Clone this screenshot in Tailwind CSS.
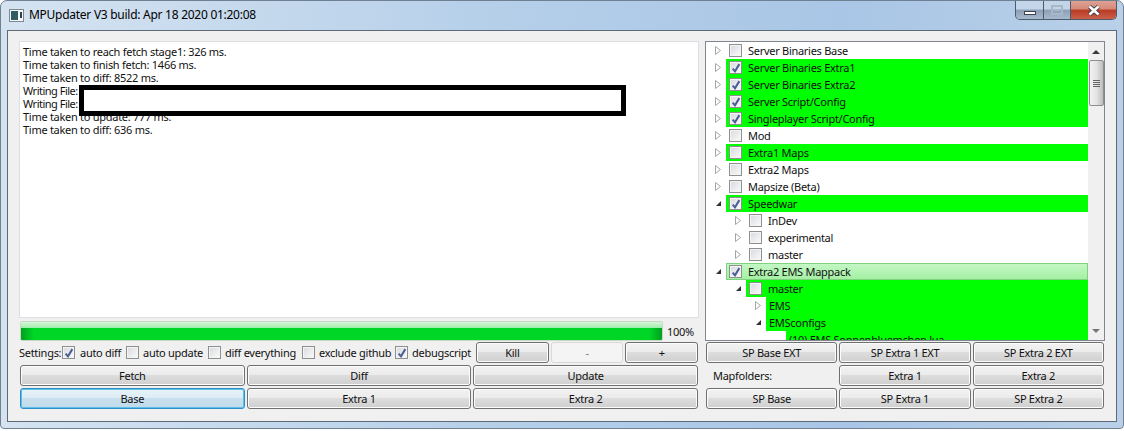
<!DOCTYPE html>
<html>
<head>
<meta charset="utf-8">
<script src="https://cdn.jsdelivr.net/npm/@tailwindcss/browser@4"></script>
</head>
<body class="bg-white">
<div class="relative flex h-[429px] w-[1124px] flex-col overflow-hidden rounded-t-[7px] rounded-b-[4px] border border-[#6f8092] bg-[linear-gradient(90deg,#d5e3f1_0%,#b5cfe9_45%,#a9c6e6_75%,#b9d0e8_100%)] font-['Noto_Sans',sans-serif] text-[11px] leading-[13px] tracking-[-0.28px] text-[#111] whitespace-nowrap">
  <!-- title bar -->
  <div class="flex h-[29px] shrink-0 items-start">
    <svg class="ml-[8px] mt-[8px] h-[13px] w-[15px] shrink-0" viewBox="0 0 15 13"><rect x="0.5" y="0.5" width="14" height="12" fill="#f5f7f8" stroke="#7d8890"/><rect x="2" y="2" width="7" height="9" fill="#2f5d66"/><rect x="11" y="3" width="2" height="6" fill="#33424a"/></svg>
    <span class="ml-[5px] mt-[6px] text-[12px] leading-[16px] tracking-[-0.27px] text-black">MPUpdater V3 build: Apr 18 2020 01:20:08</span>
    <div class="ml-auto mr-[6px] flex h-[19px] w-[102px] overflow-hidden rounded-b-[5px] border border-t-0 border-[#4f5a69]">
      <div class="flex w-[28px] items-center justify-center border-r border-[#4f5a69] bg-[linear-gradient(#c3d5e8_0%,#c3d5e8_45%,#8d9fb5_50%,#a5b9cf_100%)]"><div class="mt-[5px] h-[4px] w-[12px] border border-[#39424e] bg-white"></div></div>
      <div class="flex w-[27px] items-center justify-center border-r border-[#4f5a69] bg-[linear-gradient(#c3d5e8_0%,#c3d5e8_45%,#8d9fb5_50%,#a5b9cf_100%)]"><div class="flex h-[10px] w-[12px] items-center justify-center border-2 border-[#a9b8c9]"><div class="h-[2px] w-[6px] bg-[#a9b8c9]"></div></div></div>
      <div class="flex flex-1 items-center justify-center bg-[linear-gradient(#dda193_0%,#d58a78_45%,#bb3a24_50%,#c9604b_100%)]"><svg class="h-[11px] w-[14px]" viewBox="0 0 14 11"><path d="M2.5 1.5 L11.5 9.5 M11.5 1.5 L2.5 9.5" stroke="#3a3f48" stroke-width="4.4"/><path d="M2.5 1.5 L11.5 9.5 M11.5 1.5 L2.5 9.5" stroke="#fff" stroke-width="2.6"/></svg></div>
    </div>
  </div>
  <!-- client area -->
  <div class="mx-[6px] flex h-[392px] shrink-0 gap-[6px] border border-[#5e6a78] bg-[#f0f0f0] pl-[11px] pt-[10px]">
    <!-- left column -->
    <div class="relative flex w-[680px] shrink-0 flex-col">
      <div class="h-[277px] border border-[#dcdfe3] bg-white pl-[3px] pt-[3px]">
        <p>Time taken to reach fetch stage1: 326 ms.</p>
        <p>Time taken to finish fetch: 1466 ms.</p>
        <p>Time taken to diff: 8522 ms.</p>
        <p class="tracking-[-0.5px]">Writing File:</p>
        <p class="tracking-[-0.5px]">Writing File:</p>
        <p>Time taken to update: 777 ms.</p>
        <p>Time taken to diff: 636 ms.</p>
      </div>
      <div class="absolute left-[60px] top-[44px] h-[31px] w-[547px] border-[5px] border-black bg-white"></div>
      <div class="mt-[3px] flex h-[20px] items-center pl-px">
        <div class="h-[20px] w-[643px] rounded-[2px] border border-[#c4d8c4] bg-[linear-gradient(90deg,#00a020_0%,#00d626_2%,#00d626_98%,#00a020_100%)]">
          <div class="h-[6px] bg-[linear-gradient(#d8f5d8,#9cedaa)]"></div>
        </div>
        <span class="ml-[4px]">100%</span>
      </div>
      <div class="mt-px flex h-[21px] items-center pl-px pr-px">
        <div class="flex w-[456px] items-center">
          <span class="-ml-px w-[43px]">Settings:</span>
          <div class="flex w-[64px] items-center"><span class="flex h-[13px] w-[13px] items-center justify-center border border-[#8e8f8f] bg-[linear-gradient(135deg,#d6d9de,#fbfbfb)] shadow-[inset_0_0_0_1px_#f4f4f4]"><svg class="h-[10px] w-[10px]" viewBox="0 0 9 9"><path d="M1.5 5 L3.6 7.5 L7.5 1" fill="none" stroke="#4a5f97" stroke-width="1.8"/></svg></span><span class="ml-[5px]">auto diff</span></div>
          <div class="flex w-[82px] items-center"><span class="h-[13px] w-[13px] border border-[#8e8f8f] bg-[linear-gradient(135deg,#d6d9de,#fbfbfb)] shadow-[inset_0_0_0_1px_#f4f4f4]"></span><span class="ml-[4px]">auto update</span></div>
          <div class="flex w-[94px] items-center"><span class="h-[13px] w-[13px] border border-[#8e8f8f] bg-[linear-gradient(135deg,#d6d9de,#fbfbfb)] shadow-[inset_0_0_0_1px_#f4f4f4]"></span><span class="ml-[4px]">diff everything</span></div>
          <div class="flex w-[93px] items-center"><span class="h-[13px] w-[13px] border border-[#8e8f8f] bg-[linear-gradient(135deg,#d6d9de,#fbfbfb)] shadow-[inset_0_0_0_1px_#f4f4f4]"></span><span class="ml-[4px]">exclude github</span></div>
          <div class="flex items-center"><span class="flex h-[13px] w-[13px] items-center justify-center border border-[#8e8f8f] bg-[linear-gradient(135deg,#d6d9de,#fbfbfb)] shadow-[inset_0_0_0_1px_#f4f4f4]"><svg class="h-[10px] w-[10px]" viewBox="0 0 9 9"><path d="M1.5 5 L3.6 7.5 L7.5 1" fill="none" stroke="#4a5f97" stroke-width="1.8"/></svg></span><span class="ml-[4px]">debugscript</span></div>
        </div>
        <div class="flex flex-1 gap-[2px]">
          <button class="h-[21px] flex-1 rounded-[3px] border border-[#707070] bg-[linear-gradient(#f2f2f2_0%,#ebebeb_48%,#dddddd_50%,#cfcfcf_100%)] shadow-[inset_0_0_0_1px_#fcfcfc]">Kill</button>
          <button class="h-[21px] flex-1 rounded-[3px] border border-[#d9d9d9] bg-[#f4f4f4] text-[#777]">-</button>
          <button class="h-[21px] flex-1 rounded-[3px] border border-[#707070] bg-[linear-gradient(#f2f2f2_0%,#ebebeb_48%,#dddddd_50%,#cfcfcf_100%)] shadow-[inset_0_0_0_1px_#fcfcfc]">+</button>
        </div>
      </div>
      <div class="mt-[2px] grid grid-cols-3 gap-[2px] pl-px pr-px">
        <button class="h-[21px] rounded-[3px] border border-[#707070] bg-[linear-gradient(#f2f2f2_0%,#ebebeb_48%,#dddddd_50%,#cfcfcf_100%)] shadow-[inset_0_0_0_1px_#fcfcfc]">Fetch</button>
        <button class="h-[21px] rounded-[3px] border border-[#707070] bg-[linear-gradient(#f2f2f2_0%,#ebebeb_48%,#dddddd_50%,#cfcfcf_100%)] shadow-[inset_0_0_0_1px_#fcfcfc]">Diff</button>
        <button class="h-[21px] rounded-[3px] border border-[#707070] bg-[linear-gradient(#f2f2f2_0%,#ebebeb_48%,#dddddd_50%,#cfcfcf_100%)] shadow-[inset_0_0_0_1px_#fcfcfc]">Update</button>
      </div>
      <div class="mt-[2px] grid grid-cols-3 gap-[2px] pl-px pr-px">
        <button class="h-[21px] rounded-[3px] border border-[#2b8fc9] bg-[linear-gradient(#e8f3f9_0%,#dcebf4_48%,#c9e0ee_50%,#c0dbea_100%)] shadow-[inset_0_0_0_1px_#5fc0ea]">Base</button>
        <button class="h-[21px] rounded-[3px] border border-[#707070] bg-[linear-gradient(#f2f2f2_0%,#ebebeb_48%,#dddddd_50%,#cfcfcf_100%)] shadow-[inset_0_0_0_1px_#fcfcfc]">Extra 1</button>
        <button class="h-[21px] rounded-[3px] border border-[#707070] bg-[linear-gradient(#f2f2f2_0%,#ebebeb_48%,#dddddd_50%,#cfcfcf_100%)] shadow-[inset_0_0_0_1px_#fcfcfc]">Extra 2</button>
      </div>
    </div>
    <!-- right column -->
    <div class="flex w-[400px] shrink-0 flex-col">
      <div class="flex h-[300px] border border-[#82878f] bg-white">
        <div class="h-[298px] w-[382px] shrink-0 overflow-hidden">
          <div class="flex h-[17px] pl-[7px]"><svg class="h-[17px] w-[13px]" viewBox="0 0 13 17"><path d="M2.5 4.5 L7.5 8.5 L2.5 12.5 Z" fill="#fff" stroke="#a6a6a6"/></svg><div class="flex flex-1 items-center pl-[3px]"><span class="h-[13px] w-[13px] border border-[#8e8f8f] bg-[linear-gradient(135deg,#d6d9de,#fbfbfb)] shadow-[inset_0_0_0_1px_#f4f4f4]"></span><span class="ml-[6px]">Server Binaries Base</span></div></div>
          <div class="flex h-[17px] pl-[7px]"><svg class="h-[17px] w-[13px]" viewBox="0 0 13 17"><path d="M2.5 4.5 L7.5 8.5 L2.5 12.5 Z" fill="#fff" stroke="#a6a6a6"/></svg><div class="flex flex-1 items-center bg-[#00ff00] pl-[3px]"><span class="flex h-[13px] w-[13px] items-center justify-center border border-[#8e8f8f] bg-[linear-gradient(135deg,#d6d9de,#fbfbfb)] shadow-[inset_0_0_0_1px_#f4f4f4]"><svg class="h-[10px] w-[10px]" viewBox="0 0 9 9"><path d="M1.5 5 L3.6 7.5 L7.5 1" fill="none" stroke="#4a5f97" stroke-width="1.8"/></svg></span><span class="ml-[6px]">Server Binaries Extra1</span></div></div>
          <div class="flex h-[17px] pl-[7px]"><svg class="h-[17px] w-[13px]" viewBox="0 0 13 17"><path d="M2.5 4.5 L7.5 8.5 L2.5 12.5 Z" fill="#fff" stroke="#a6a6a6"/></svg><div class="flex flex-1 items-center bg-[#00ff00] pl-[3px]"><span class="flex h-[13px] w-[13px] items-center justify-center border border-[#8e8f8f] bg-[linear-gradient(135deg,#d6d9de,#fbfbfb)] shadow-[inset_0_0_0_1px_#f4f4f4]"><svg class="h-[10px] w-[10px]" viewBox="0 0 9 9"><path d="M1.5 5 L3.6 7.5 L7.5 1" fill="none" stroke="#4a5f97" stroke-width="1.8"/></svg></span><span class="ml-[6px]">Server Binaries Extra2</span></div></div>
          <div class="flex h-[17px] pl-[7px]"><svg class="h-[17px] w-[13px]" viewBox="0 0 13 17"><path d="M2.5 4.5 L7.5 8.5 L2.5 12.5 Z" fill="#fff" stroke="#a6a6a6"/></svg><div class="flex flex-1 items-center bg-[#00ff00] pl-[3px]"><span class="flex h-[13px] w-[13px] items-center justify-center border border-[#8e8f8f] bg-[linear-gradient(135deg,#d6d9de,#fbfbfb)] shadow-[inset_0_0_0_1px_#f4f4f4]"><svg class="h-[10px] w-[10px]" viewBox="0 0 9 9"><path d="M1.5 5 L3.6 7.5 L7.5 1" fill="none" stroke="#4a5f97" stroke-width="1.8"/></svg></span><span class="ml-[6px]">Server Script/Config</span></div></div>
          <div class="flex h-[17px] pl-[7px]"><svg class="h-[17px] w-[13px]" viewBox="0 0 13 17"><path d="M2.5 4.5 L7.5 8.5 L2.5 12.5 Z" fill="#fff" stroke="#a6a6a6"/></svg><div class="flex flex-1 items-center bg-[#00ff00] pl-[3px]"><span class="flex h-[13px] w-[13px] items-center justify-center border border-[#8e8f8f] bg-[linear-gradient(135deg,#d6d9de,#fbfbfb)] shadow-[inset_0_0_0_1px_#f4f4f4]"><svg class="h-[10px] w-[10px]" viewBox="0 0 9 9"><path d="M1.5 5 L3.6 7.5 L7.5 1" fill="none" stroke="#4a5f97" stroke-width="1.8"/></svg></span><span class="ml-[6px]">Singleplayer Script/Config</span></div></div>
          <div class="flex h-[17px] pl-[7px]"><svg class="h-[17px] w-[13px]" viewBox="0 0 13 17"><path d="M2.5 4.5 L7.5 8.5 L2.5 12.5 Z" fill="#fff" stroke="#a6a6a6"/></svg><div class="flex flex-1 items-center pl-[3px]"><span class="h-[13px] w-[13px] border border-[#8e8f8f] bg-[linear-gradient(135deg,#d6d9de,#fbfbfb)] shadow-[inset_0_0_0_1px_#f4f4f4]"></span><span class="ml-[6px]">Mod</span></div></div>
          <div class="flex h-[17px] pl-[7px]"><svg class="h-[17px] w-[13px]" viewBox="0 0 13 17"><path d="M2.5 4.5 L7.5 8.5 L2.5 12.5 Z" fill="#fff" stroke="#a6a6a6"/></svg><div class="flex flex-1 items-center bg-[#00ff00] pl-[3px]"><span class="h-[13px] w-[13px] border border-[#8e8f8f] bg-[linear-gradient(135deg,#d6d9de,#fbfbfb)] shadow-[inset_0_0_0_1px_#f4f4f4]"></span><span class="ml-[6px]">Extra1 Maps</span></div></div>
          <div class="flex h-[17px] pl-[7px]"><svg class="h-[17px] w-[13px]" viewBox="0 0 13 17"><path d="M2.5 4.5 L7.5 8.5 L2.5 12.5 Z" fill="#fff" stroke="#a6a6a6"/></svg><div class="flex flex-1 items-center pl-[3px]"><span class="h-[13px] w-[13px] border border-[#8e8f8f] bg-[linear-gradient(135deg,#d6d9de,#fbfbfb)] shadow-[inset_0_0_0_1px_#f4f4f4]"></span><span class="ml-[6px]">Extra2 Maps</span></div></div>
          <div class="flex h-[17px] pl-[7px]"><svg class="h-[17px] w-[13px]" viewBox="0 0 13 17"><path d="M2.5 4.5 L7.5 8.5 L2.5 12.5 Z" fill="#fff" stroke="#a6a6a6"/></svg><div class="flex flex-1 items-center pl-[3px]"><span class="h-[13px] w-[13px] border border-[#8e8f8f] bg-[linear-gradient(135deg,#d6d9de,#fbfbfb)] shadow-[inset_0_0_0_1px_#f4f4f4]"></span><span class="ml-[6px]">Mapsize (Beta)</span></div></div>
          <div class="flex h-[17px] pl-[7px]"><svg class="h-[17px] w-[13px]" viewBox="0 0 13 17"><path d="M8 6 L8 11 L3 11 Z" fill="#333"/></svg><div class="flex flex-1 items-center bg-[#00ff00] pl-[3px]"><span class="flex h-[13px] w-[13px] items-center justify-center border border-[#8e8f8f] bg-[linear-gradient(135deg,#d6d9de,#fbfbfb)] shadow-[inset_0_0_0_1px_#f4f4f4]"><svg class="h-[10px] w-[10px]" viewBox="0 0 9 9"><path d="M1.5 5 L3.6 7.5 L7.5 1" fill="none" stroke="#4a5f97" stroke-width="1.8"/></svg></span><span class="ml-[6px]">Speedwar</span></div></div>
          <div class="flex h-[17px] pl-[27px]"><svg class="h-[17px] w-[13px]" viewBox="0 0 13 17"><path d="M2.5 4.5 L7.5 8.5 L2.5 12.5 Z" fill="#fff" stroke="#a6a6a6"/></svg><div class="flex flex-1 items-center pl-[3px]"><span class="h-[13px] w-[13px] border border-[#8e8f8f] bg-[linear-gradient(135deg,#d6d9de,#fbfbfb)] shadow-[inset_0_0_0_1px_#f4f4f4]"></span><span class="ml-[6px]">InDev</span></div></div>
          <div class="flex h-[17px] pl-[27px]"><svg class="h-[17px] w-[13px]" viewBox="0 0 13 17"><path d="M2.5 4.5 L7.5 8.5 L2.5 12.5 Z" fill="#fff" stroke="#a6a6a6"/></svg><div class="flex flex-1 items-center pl-[3px]"><span class="h-[13px] w-[13px] border border-[#8e8f8f] bg-[linear-gradient(135deg,#d6d9de,#fbfbfb)] shadow-[inset_0_0_0_1px_#f4f4f4]"></span><span class="ml-[6px]">experimental</span></div></div>
          <div class="flex h-[17px] pl-[27px]"><svg class="h-[17px] w-[13px]" viewBox="0 0 13 17"><path d="M2.5 4.5 L7.5 8.5 L2.5 12.5 Z" fill="#fff" stroke="#a6a6a6"/></svg><div class="flex flex-1 items-center pl-[3px]"><span class="h-[13px] w-[13px] border border-[#8e8f8f] bg-[linear-gradient(135deg,#d6d9de,#fbfbfb)] shadow-[inset_0_0_0_1px_#f4f4f4]"></span><span class="ml-[6px]">master</span></div></div>
          <div class="flex h-[17px] pl-[7px]"><svg class="h-[17px] w-[13px]" viewBox="0 0 13 17"><path d="M8 6 L8 11 L3 11 Z" fill="#333"/></svg><div class="flex flex-1 items-center border border-[#7fd07f] bg-[linear-gradient(#c4f7c4,#a4f0a4)] pl-[2px]"><span class="flex h-[13px] w-[13px] items-center justify-center border border-[#8e8f8f] bg-[linear-gradient(135deg,#d6d9de,#fbfbfb)] shadow-[inset_0_0_0_1px_#f4f4f4]"><svg class="h-[10px] w-[10px]" viewBox="0 0 9 9"><path d="M1.5 5 L3.6 7.5 L7.5 1" fill="none" stroke="#4a5f97" stroke-width="1.8"/></svg></span><span class="ml-[6px]">Extra2 EMS Mappack</span></div></div>
          <div class="flex h-[17px] pl-[27px]"><svg class="h-[17px] w-[13px]" viewBox="0 0 13 17"><path d="M8 6 L8 11 L3 11 Z" fill="#333"/></svg><div class="flex flex-1 items-center bg-[#00ff00] pl-[3px]"><span class="h-[13px] w-[13px] border border-[#8e8f8f] bg-[linear-gradient(135deg,#d6d9de,#fbfbfb)] shadow-[inset_0_0_0_1px_#f4f4f4]"></span><span class="ml-[6px]">master</span></div></div>
          <div class="flex h-[17px] pl-[47px]"><svg class="h-[17px] w-[13px]" viewBox="0 0 13 17"><path d="M2.5 4.5 L7.5 8.5 L2.5 12.5 Z" fill="#fff" stroke="#a6a6a6"/></svg><div class="flex flex-1 items-center bg-[#00ff00] pl-[3px]">EMS</div></div>
          <div class="flex h-[17px] pl-[47px]"><svg class="h-[17px] w-[13px]" viewBox="0 0 13 17"><path d="M8 6 L8 11 L3 11 Z" fill="#333"/></svg><div class="flex flex-1 items-center bg-[#00ff00] pl-[3px]">EMSconfigs</div></div>
          <div class="flex h-[17px] pl-[80px]"><div class="flex flex-1 items-center bg-[#00ff00] pl-[3px]">(10) EMS Sonnenbluemchen.lua</div></div>
        </div>
        <!-- scrollbar -->
        <div class="flex w-[16px] shrink-0 flex-col items-center bg-[#f0f0f0]">
          <svg class="h-[18px] w-[16px] shrink-0" viewBox="0 0 16 18"><path d="M4 12 L8 8 L12 12 Z" fill="#3a3a3a"/></svg>
          <div class="flex h-[46px] w-[15px] flex-col items-center justify-center gap-px rounded-[2px] border border-[#8f8f8f] bg-[linear-gradient(90deg,#f2f2f2,#e4e4e4_50%,#bcbcbc)]">
            <span class="h-px w-[7px] bg-[#666]"></span><span class="h-px w-[7px] bg-[#666]"></span><span class="h-px w-[7px] bg-[#666]"></span><span class="h-px w-[7px] bg-[#666]"></span>
          </div>
          <svg class="mt-auto h-[18px] w-[16px] shrink-0" viewBox="0 0 16 18"><path d="M4 7 L12 7 L8 11 Z" fill="#777"/></svg>
        </div>
      </div>
      <div class="mt-px grid grid-cols-3 gap-[2px] pl-px pr-px">
        <button class="h-[21px] rounded-[3px] border border-[#707070] bg-[linear-gradient(#f2f2f2_0%,#ebebeb_48%,#dddddd_50%,#cfcfcf_100%)] shadow-[inset_0_0_0_1px_#fcfcfc]">SP Base EXT</button>
        <button class="h-[21px] rounded-[3px] border border-[#707070] bg-[linear-gradient(#f2f2f2_0%,#ebebeb_48%,#dddddd_50%,#cfcfcf_100%)] shadow-[inset_0_0_0_1px_#fcfcfc]">SP Extra 1 EXT</button>
        <button class="h-[21px] rounded-[3px] border border-[#707070] bg-[linear-gradient(#f2f2f2_0%,#ebebeb_48%,#dddddd_50%,#cfcfcf_100%)] shadow-[inset_0_0_0_1px_#fcfcfc]">SP Extra 2 EXT</button>
      </div>
      <div class="mt-[2px] grid grid-cols-3 gap-[2px] pl-px pr-px">
        <div class="flex h-[21px] items-center pl-[7px]">Mapfolders:</div>
        <button class="h-[21px] rounded-[3px] border border-[#707070] bg-[linear-gradient(#f2f2f2_0%,#ebebeb_48%,#dddddd_50%,#cfcfcf_100%)] shadow-[inset_0_0_0_1px_#fcfcfc]">Extra 1</button>
        <button class="h-[21px] rounded-[3px] border border-[#707070] bg-[linear-gradient(#f2f2f2_0%,#ebebeb_48%,#dddddd_50%,#cfcfcf_100%)] shadow-[inset_0_0_0_1px_#fcfcfc]">Extra 2</button>
      </div>
      <div class="mt-[2px] grid grid-cols-3 gap-[2px] pl-px pr-px">
        <button class="h-[21px] rounded-[3px] border border-[#707070] bg-[linear-gradient(#f2f2f2_0%,#ebebeb_48%,#dddddd_50%,#cfcfcf_100%)] shadow-[inset_0_0_0_1px_#fcfcfc]">SP Base</button>
        <button class="h-[21px] rounded-[3px] border border-[#707070] bg-[linear-gradient(#f2f2f2_0%,#ebebeb_48%,#dddddd_50%,#cfcfcf_100%)] shadow-[inset_0_0_0_1px_#fcfcfc]">SP Extra 1</button>
        <button class="h-[21px] rounded-[3px] border border-[#707070] bg-[linear-gradient(#f2f2f2_0%,#ebebeb_48%,#dddddd_50%,#cfcfcf_100%)] shadow-[inset_0_0_0_1px_#fcfcfc]">SP Extra 2</button>
      </div>
    </div>
  </div>
</div>
</body>
</html>
